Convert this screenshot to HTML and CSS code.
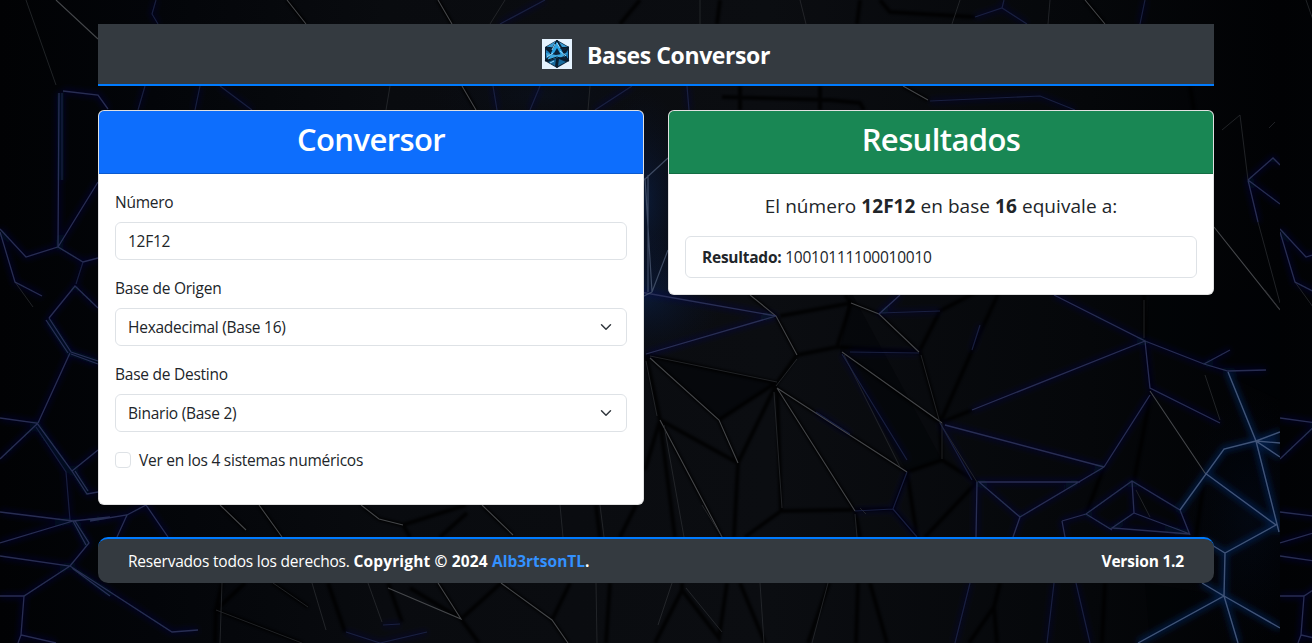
FILE: index.html
```
<!DOCTYPE html>
<html lang="es">
<head>
<meta charset="utf-8">
<title>Bases Conversor</title>
<link rel="stylesheet" href="styles.css">
</head>
<body>
<svg class="backdrop" width="1312" height="643" viewBox="0 0 1312 643" aria-hidden="true">
  <defs>
    <linearGradient id="base"><stop offset="0" stop-color="#010204"/><stop offset=".12" stop-color="#030509"/><stop offset=".3" stop-color="#090b0f"/><stop offset=".6" stop-color="#0b0d11"/><stop offset=".85" stop-color="#05070a"/><stop offset="1" stop-color="#010204"/></linearGradient>
    <radialGradient id="haze"><stop offset="0" stop-color="#0b2c6b" stop-opacity=".4"/><stop offset="1" stop-color="#06143a" stop-opacity="0"/></radialGradient>
    <filter id="soft" x="0" y="0" width="1312" height="643" filterUnits="userSpaceOnUse"><feGaussianBlur stdDeviation="3"/></filter>
    <filter id="shade" x="0" y="0" width="1312" height="643" filterUnits="userSpaceOnUse"><feGaussianBlur stdDeviation="1"/></filter>
    <clipPath id="tileClip"><rect width="1280" height="643"/></clipPath>
    <path id="cracks" d="M750 295L776 316 797 355 777 383 646 355M777 382L719 420 650 358M719 420L738 463 777 383M646 355L660 420 738 463M722 537L660 420 645 470M660 420L675 537M738 463L734 537M855 511L777 388 907 472M842 352L940 423M777 388L781 511 893 509 907 472 942 460 977 482M942 460L940 423M797 355L837 347 920 352 940 423M837 347L851 303 780 316M851 303L879 314 919 352 940 311 980 290M851 303L845 295M940 423L980 333 1000 290M940 423L972 410M781 511L745 537M855 511L860 537M907 472L917 537 893 509M977 482L925 537M1144 290L1145 341 1152 388 1134 481M1205 473L1196 537M1104 467L1086 514
      M220 505L246 530M259 505L282 537M361 505L379 519 403 525 466 505M403 525L410 537M482 505L513 535M467 513L440 537M596 505L600 537M636 505L620 537M222 583L216 610 215 643M302 643L216 610 245 583M273 583L308 607M328 583L345 632M388 583L402 622M410 588L461 619 438 583M479 643L461 619 501 583 552 620 570 583M552 620L568 643M682 583V590L719 638 727 583M682 590L655 643M740 583L765 643M829 583L808 643M858 583L856 643M870 583L887 643M1000 583L994 607 969 643M994 607L997 643M1105 583L1102 643M610 583L606 643
      M287 0L306 24M438 0L452 24M640 0L620 24M720 0L717 24M880 0L890 12 975 17M860 0L857 24M1085 0L1105 24M462 86L476 110M722 97L830 100 860 103 864 110M903 86L928 100M740 86V110M820 86V110M1190 86L1194 110"/>
    <path id="ridges" d="M750 295L776 316 797 355M650 358L719 420 738 463M777 388L907 472M777 388L855 511M842 352L942 423M660 420L722 537M851 303L879 314 919 352M1150 391L1205 473M388 588L461 619 438 583M501 583L552 620 568 643M220 505L246 530M361 505L379 519 403 525M482 505L513 535M259 505L282 537M56 0L98 39M1214 227L1280 310M287 0L306 24M438 0L452 24M1085 0L1105 24M903 86L928 100M462 86L476 110"/>
    <path id="edges" d="M650 356L777 382M942 423V459M921 355L940 423 977 482M216 610L302 643M273 583L308 607M26 0L56 85M15 282L33 307M1240 115L1248 180M1222 130L1240 115M1258 222L1280 303M1269 128L1275 122M1265 290L1280 310M1205 375L1220 420M1136 490L1150 517M368 583L382 622M774 392L782 508M866 514L860 508M797 359L776 386M646 361L657 416M664 425L684 537M702 505L722 537M855 514L857 537M844 355L900 467M672 583L658 625M686 588L722 632M828 583L812 643M1144 300V338M600 505L604 537M560 505L563 537M222 583L220 643M312 583L326 630M596 583L597 643M760 583L764 643M505 0L490 24M700 0V24M800 0L806 24M960 0L952 24M1050 0L1048 24M390 86L386 110M590 86L588 110"/>
    <path id="veins" d="M63 91L98 95 108 109M59 93L58 247M58 247L98 182M0 229L26 257 58 247 83 262 98 258M0 232L15 282 42 296M49 318L75 286 98 308M46 320L68 353M49 318L71 352 98 361M71 354L98 364M70 353L38 423M0 418L37 423 72 471 87 494 98 492M75 471L88 491M0 459L37 424M72 471L98 450M0 512L73 521 110 517M73 521L0 543M73 521L86 545M75 521L89 543 70 566M0 556L70 566 172 632 198 630M72 568L110 596M70 566L24 596 0 596M24 596L21 635 56 643M21 635L18 643M90 521L127 515 146 505M127 515L117 537M146 505L168 537
      M640 292L776 316 646 354M879 314L900 295M1104 467L1020 517 979 482 1080 482M945 425L1104 467M1020 517L1013 537M977 482L976 537M1104 467L1150 395M1054 295L1145 341 972 410M1145 341L1150 388 1220 423M1145 341L1204 364 1228 371 1266 370M1204 364L1230 350M1062 521L1086 514 1132 481 1180 510 1190 535M1062 521L1065 537M1086 514L1112 530M1132 481L1134 513 1112 528 1190 534 1134 513M1248 180L1273 158 1280 165M1248 180L1280 204M1248 180L1258 222"/>
    <path id="faint" d="M62 93V180M83 262L76 284M36 427L66 472 70 520M346 632L380 643 427 632M383 625L400 624M842 354L907 460M879 313L940 311M816 412L850 434M850 352L919 353M972 350L980 325M940 423L972 480M970 583L955 643M1054 583L1047 643M1076 583L1090 643M855 511L893 509 907 472M893 509L917 537M156 0L152 14 158 24M545 0L500 24M975 17L1002 8 1027 24M1002 8L1004 0M145 86L138 110M200 86L195 110M220 86L252 110M493 86L497 110M540 86L530 110M632 86L595 110M687 86L689 110M930 101L1040 96 1075 110M1145 0L1140 24"/>
    <path id="arcs" d="M1180 510L1224 449 1256 441 1280 432M1256 441L1280 443M1280 457L1256 441 1228 372M1256 441L1279 532M1205 473L1276 525 1225 553 1202 539M1225 553L1224 596 1202 583M1138 643L1224 596 1238 643M1224 596L1280 628"/>
    <path id="gapline" d="M645 178L652 292 668 250M640 298L652 292M644 180L668 158M648 175V292"/>
    <g id="tile" clip-path="url(#tileClip)" fill="none">
      <rect width="1280" height="643" fill="url(#base)"/>
      <path d="M850 290L942 460 907 472 840 352ZM646 355L777 383 719 420ZM1150 290H1280V400L1204 364 1145 341ZM1205 473L1224 449 1256 441 1276 525ZM1145 583L1224 596 1150 643Z" fill="#010204" opacity=".4"/>
      <ellipse cx="645" cy="295" rx="80" ry="65" fill="url(#haze)"/>
      <ellipse cx="645" cy="200" rx="45" ry="110" fill="url(#haze)"/>
      <ellipse cx="1250" cy="520" rx="75" ry="130" fill="url(#haze)" opacity=".3"/>
      <ellipse cx="540" cy="95" rx="110" ry="35" fill="url(#haze)" opacity=".25"/>
      <use href="#cracks" stroke="#000" stroke-width="4" filter="url(#shade)" opacity=".8"/>
      <g filter="url(#soft)"><use href="#veins" stroke="#04125a" stroke-width="4" opacity=".5"/><use href="#faint" stroke="#04125a" stroke-width="4" opacity=".4"/><use href="#arcs" stroke="#0b3080" stroke-width="6" opacity=".5"/></g>
      <use href="#ridges" stroke="#505256" stroke-width="1.1" opacity=".85"/>
      <use href="#edges" stroke="#2b2d31" stroke-width="1" opacity=".75"/>
      <use href="#veins" stroke="#323860" stroke-width="1.3" opacity=".8"/>
      <use href="#faint" stroke="#20284c" stroke-width="1.2" opacity=".75"/>
      <use href="#arcs" stroke="#4c5f84" stroke-width="1.4" opacity=".85"/>
      <use href="#gapline" stroke="#4a5870" stroke-width="1.2" opacity=".8"/>
    </g>
  </defs>
  <use href="#tile"/>
  <use href="#tile" x="1280"/>
</svg>

<div class="container">
  <header class="topbar">
    <svg class="logo" width="30" height="30" viewBox="0 0 30 30" aria-hidden="true">
      <rect width="30" height="30" fill="#e5f3ff"/>
      <path d="M15 1L27 8V22L15 29 3 22V8Z" fill="#0b2239"/>
      <path d="M14 2L4 8 10 9ZM17 3L26 8 20 8Z" fill="#3a9bd2"/>
      <path d="M15 2L8 16 12 14 15 9 19 16 23 18Z" fill="#2ba4e5"/>
      <path d="M4 11L9 14 4 20ZM26 11L23 15 26 20Z" fill="#1979b8"/>
      <path d="M4 14L14 16 26 14 20 18 15 19 6 21Z" fill="#3fa9e0"/>
      <path d="M6 23L14 20 13 27ZM24 23L17 20 16 27Z" fill="#176b9e"/>
      <path d="M15 1L11 9 4 8 9 15 3 22 15 18 27 22 21 14 27 8 18 9ZM15 19V29" fill="none" stroke="#071827"/>
      <path d="M13 5L10 11M5 18L11 14M18 12L24 17M12 22L8 24M15 4L18 9" fill="none" stroke="#9bdcff"/>
    </svg>
    <h1 class="brand">Bases Conversor</h1>
  </header>

  <main class="panels">
    <section class="card">
      <h2 class="card-header primary">Conversor</h2>
      <form class="card-body">
        <label class="form-label" for="numero">Número</label>
        <input class="control" id="numero" type="text" value="12F12">
        <label class="form-label origin" for="origen">Base de Origen</label>
        <select class="control select" id="origen"><option>Hexadecimal (Base 16)</option></select>
        <label class="form-label" for="destino">Base de Destino</label>
        <select class="control select" id="destino"><option>Binario (Base 2)</option></select>
        <label class="check"><input class="check-box" type="checkbox"><span>Ver en los 4 sistemas numéricos</span></label>
      </form>
    </section>

    <section class="card">
      <h2 class="card-header success">Resultados</h2>
      <div class="card-body">
        <p class="lead">El número <strong>12F12</strong> en base <strong>16</strong> equivale a:</p>
        <div class="result"><strong>Resultado:</strong> 10010111100010010</div>
      </div>
    </section>
  </main>

  <footer class="footer">
    <span class="rights">Reservados todos los derechos. <strong class="copyright">Copyright © 2024 <a class="author" href="#">Alb3rtsonTL</a>.</strong></span>
    <strong class="version">Version 1.2</strong>
  </footer>
</div>
</body>
</html>
```
FILE: styles.css
```
* { box-sizing: border-box; }
body {
  margin: 0;
  min-height: 643px;
  overflow: hidden;
  background: #020306;
  color: #212529;
  font: 400 15.5px/24px "Open Sans", "Noto Sans", sans-serif;
  letter-spacing: -.25px;
}
h1, h2, p { margin: 0; }
.backdrop { position: absolute; left: 0; top: 0; z-index: -1; }
.container { width: 1116px; margin: 0 auto; padding-top: 24px; }
.topbar {
  display: flex;
  justify-content: center;
  align-items: center;
  gap: 15px;
  height: 62px;
  background: #343a40;
  border-bottom: 2px solid #007bff;
}
.logo { display: block; }
.brand { color: #fff; font-size: 23px; line-height: 30px; font-weight: 700; letter-spacing: -.4px; padding-top: 1px; }
.panels {
  display: grid;
  grid-template-columns: 1fr 1fr;
  gap: 24px;
  align-items: start;
  margin-top: 24px;
}
.card {
  background: #fff;
  border: 1px solid rgba(222, 222, 222, .9);
  border-radius: 6px;
  overflow: hidden;
}
.card-header {
  height: 63px;
  padding-top: 9px;
  color: #fff;
  text-align: center;
  font-size: 31px;
  line-height: 38px;
  font-weight: 600;
  letter-spacing: -.6px;
  border-bottom: 1px solid rgba(0, 0, 0, .18);
}
.primary { background-color: #0d6efd; }
.success { background-color: #198754; }
.card-body { padding: 16px; }
form.card-body { height: 330px; }
.form-label { display: block; width: max-content; margin-bottom: 8px; }
.origin { letter-spacing: -.25px; }
.control {
  display: block;
  width: 100%;
  height: 38px;
  margin: 0 0 16px;
  padding: 6px 12px;
  border: 1px solid #dee2e6;
  border-radius: 6px;
  background-color: #fff;
  color: #212529;
  font: inherit;
  letter-spacing: inherit;
  outline: none;
}
.select {
  appearance: none;
  background-image: url("data:image/svg+xml,%3csvg xmlns='http://www.w3.org/2000/svg' viewBox='0 0 16 16'%3e%3cpath fill='none' stroke='%23343a40' stroke-linecap='round' stroke-linejoin='round' stroke-width='2' d='m2 5 6 6 6-6'/%3e%3c/svg%3e");
  background-repeat: no-repeat;
  background-position: right 14px center;
  background-size: 12px 12px;
}
.check { display: flex; align-items: center; gap: 8px; height: 24px; }
.check-box {
  appearance: none;
  width: 16px;
  height: 16px;
  margin: 0;
  border: 1px solid #dee2e6;
  border-radius: 4px;
  background: #fff;
}
.lead {
  height: 30px;
  margin-bottom: 16px;
  text-align: center;
  font-size: 19px;
  line-height: 32px;
  letter-spacing: .06px;
}
.result { height: 42px; padding: 8px 16px; border: 1px solid #dee2e6; border-radius: 6px; }
.footer {
  display: flex;
  justify-content: space-between;
  align-items: center;
  height: 46px;
  margin-top: 32px;
  padding: 0 30px;
  background: #343a40;
  border-top: 2px solid #007bff;
  border-radius: 10px;
  color: #fff;
}
.rights { letter-spacing: -.21px; }
.copyright { letter-spacing: .15px; }
.author { color: #3391ff; letter-spacing: 0; text-decoration: none; }
.version { letter-spacing: -.2px; }
```
